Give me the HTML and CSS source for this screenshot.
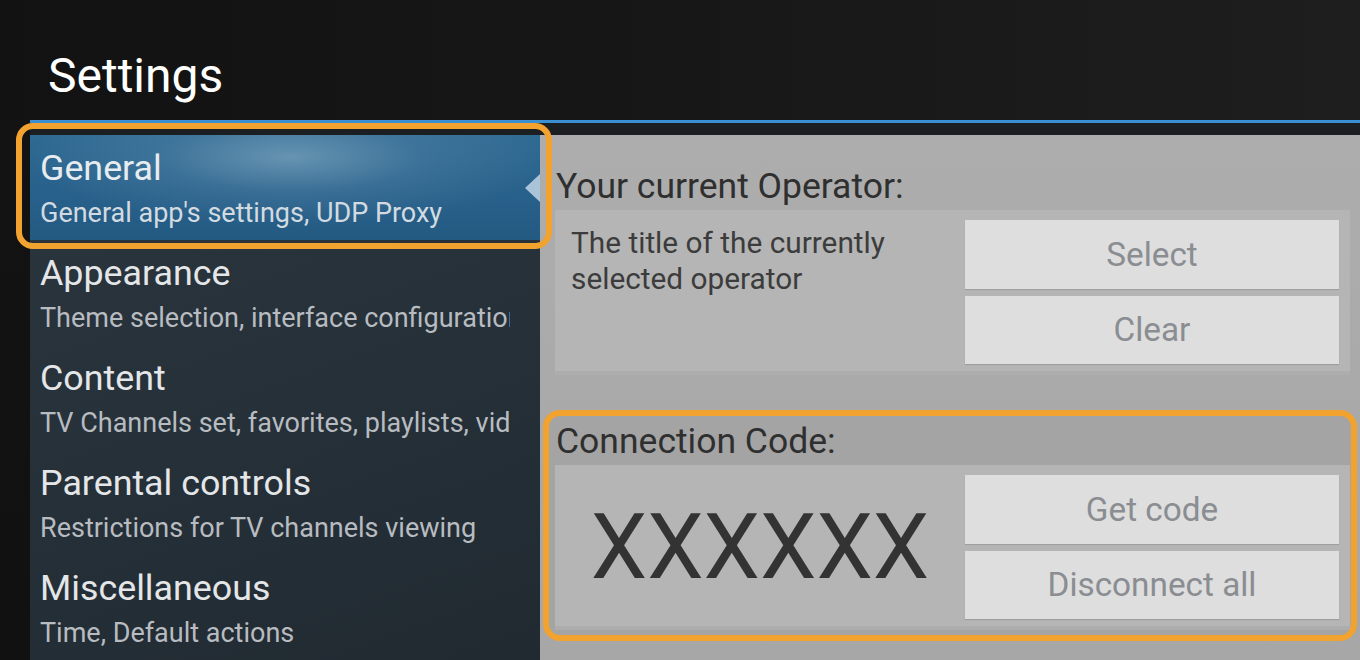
FILE: index.html
```html
<!DOCTYPE html>
<html lang="en">
<head>
<meta charset="utf-8">
<title>Settings</title>
<link rel="stylesheet" href="styles.css">
</head>
<body>
<div class="page">
  <header class="header">
    <h1 class="title">Settings</h1>
  </header>
  <div class="rule"></div>
  <div class="band"></div>
  <div class="main">
    <nav class="sidebar">
      <div class="item selected">
        <div class="item-title">General</div>
        <div class="item-sub">General app's settings, UDP Proxy</div>
      </div>
      <div class="item">
        <div class="item-title">Appearance</div>
        <div class="item-sub">Theme selection, interface configuration</div>
      </div>
      <div class="item">
        <div class="item-title">Content</div>
        <div class="item-sub">TV Channels set, favorites, playlists, video</div>
      </div>
      <div class="item">
        <div class="item-title">Parental controls</div>
        <div class="item-sub">Restrictions for TV channels viewing</div>
      </div>
      <div class="item">
        <div class="item-title">Miscellaneous</div>
        <div class="item-sub">Time, Default actions</div>
      </div>
    </nav>
    <section class="content">
      <div class="section">
        <div class="section-title">Your current Operator:</div>
        <div class="card">
          <div class="card-text">The title of the currently selected operator</div>
          <div class="buttons">
            <div class="btn">Select</div>
            <div class="btn">Clear</div>
          </div>
        </div>
      </div>
      <div class="section focused">
        <div class="section-title">Connection Code:</div>
        <div class="card">
          <div class="code">XXXXXX</div>
          <div class="buttons">
            <div class="btn">Get code</div>
            <div class="btn">Disconnect all</div>
          </div>
        </div>
      </div>
    </section>
  </div>
</div>
</body>
</html>
```
FILE: styles.css
```css
html, body {
  margin: 0;
  padding: 0;
}
body {
  width: 1360px;
  height: 660px;
  overflow: hidden;
  background: linear-gradient(180deg, #131313 0%, #111111 100%);
  font-family: Roboto, "Noto Sans", "Liberation Sans", sans-serif;
}
.page {
  display: flex;
  flex-direction: column;
  height: 660px;
}
.header {
  height: 120px;
  box-sizing: border-box;
  padding: 48px 0 0 48px;
  background: linear-gradient(90deg, #121212 0%, #171717 50%, #1e1e1e 100%);
}
.title {
  margin: 0;
  font-size: 48px;
  line-height: 56px;
  font-weight: 400;
  color: #ffffff;
}
.rule {
  margin-left: 30px;
  height: 3px;
  background: #3a8fd3;
}
.band {
  margin-left: 30px;
  height: 12px;
  background: #1c1f22;
}
.main {
  flex: 1;
  display: flex;
  margin-left: 30px;
  min-height: 0;
}
.sidebar {
  width: 510px;
  flex: none;
  background: linear-gradient(160deg, #2a353e 0%, #26313a 45%, #212a31 100%);
}
.item {
  height: 105px;
  box-sizing: border-box;
  padding: 12px 30px 0 10px;
  position: relative;
}
.item-title {
  font-size: 35.8px;
  line-height: 42px;
  color: #e4e6e8;
  white-space: nowrap;
  overflow: hidden;
}
.item-sub {
  font-size: 27px;
  line-height: 48px;
  color: #b8bcc0;
  white-space: nowrap;
  overflow: hidden;
}
.item.selected {
  background:
    radial-gradient(ellipse 260px 70px at 260px 22px, rgba(150, 185, 205, 0.55) 0%, rgba(110, 150, 180, 0.25) 50%, rgba(40, 90, 130, 0) 100%),
    linear-gradient(180deg, #2f6a93 0%, #27608a 60%, #235a82 100%);
}
.item.selected .item-title {
  color: #e6ecf0;
}
.item.selected .item-sub {
  color: #d3dbe1;
}
.item.selected::before {
  content: "";
  position: absolute;
  right: 0;
  top: 39px;
  width: 0;
  height: 0;
  border-top: 14px solid transparent;
  border-bottom: 14px solid transparent;
  border-right: 15px solid #a9c4d8;
}
.item.selected::after {
  content: "";
  position: absolute;
  left: -14px;
  top: -12px;
  right: -12px;
  bottom: -9px;
  border: 6px solid #f2a22e;
  border-radius: 17px;
  pointer-events: none;
}
.content {
  flex: 1;
  box-sizing: border-box;
  padding: 31px 10px 0 15px;
  background: linear-gradient(180deg, #adadad 0%, #a9a9a9 60%, #a7a7a7 100%);
  display: flex;
  flex-direction: column;
  gap: 46px;
}
.section {
  display: flex;
  flex-direction: column;
  gap: 4px;
}
.section-title {
  font-size: 35.5px;
  line-height: 40px;
  color: #2f2f2f;
  padding-left: 1px;
}
.card {
  height: 165px;
  box-sizing: border-box;
  display: flex;
  background: #b5b5b5;
  box-shadow: inset 0 -4px 0 rgba(0, 0, 0, 0.04);
}
.card-text {
  flex: 1;
  padding: 15px 20px 0 16px;
  font-size: 29.8px;
  line-height: 36px;
  color: #3c3c3c;
}
.code {
  flex: 1;
  display: flex;
  align-items: center;
  justify-content: center;
  font-size: 90px;
  line-height: 100px;
  color: #333333;
}
.buttons {
  width: 374px;
  flex: none;
  display: flex;
  flex-direction: column;
  gap: 7px;
  padding: 10px 11px 11px 0;
}
.btn {
  flex: 1;
  display: flex;
  align-items: center;
  justify-content: center;
  background: #dedede;
  box-shadow: 0 1px 1px rgba(0, 0, 0, 0.12);
  font-size: 33.3px;
  color: #8a8d91;
}
.section.focused {
  position: relative;
  z-index: 0;
}
.section.focused::before {
  content: "";
  position: absolute;
  left: -10px;
  top: -9px;
  right: -5px;
  bottom: -9px;
  background: #a4a4a4;
  border-radius: 12px;
  z-index: -1;
}
.section.focused::after {
  content: "";
  position: absolute;
  left: -12px;
  top: -11px;
  right: -7px;
  bottom: -11px;
  border: 6px solid #f2a22e;
  border-radius: 17px;
  pointer-events: none;
}
```
